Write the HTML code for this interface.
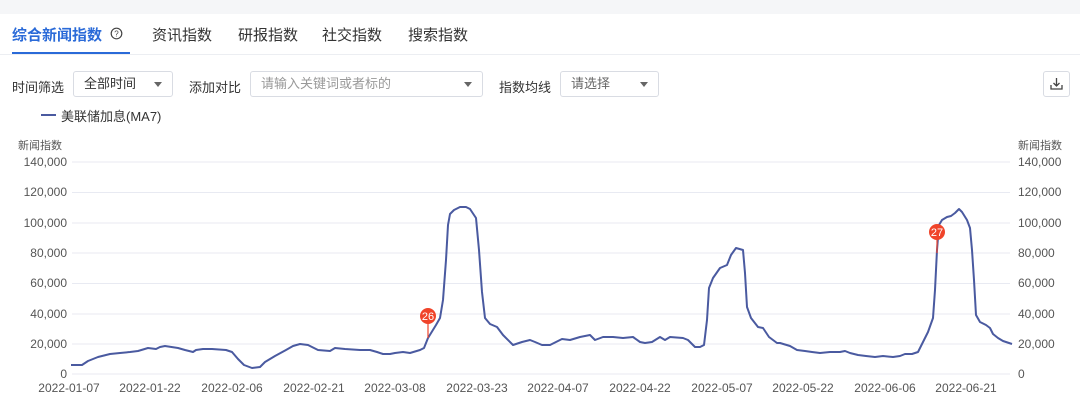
<!DOCTYPE html>
<html><head><meta charset="utf-8"><style>
body{margin:0;width:1080px;height:401px;background:#f5f6f8;font-family:"Liberation Sans","Noto Sans CJK SC",sans-serif;overflow:hidden;position:relative}
.card{position:absolute;left:0;top:14px;width:1080px;height:387px;background:#fff}
.t{position:absolute;white-space:nowrap}
.tab{top:24px;font-size:15px;color:#333}
.sel{position:absolute;top:71px;height:26px;border:1px solid #d9dce3;border-radius:3px;background:#fff;box-sizing:border-box;font-size:13px;color:#333;line-height:24px;padding-left:10px}
.sel i{position:absolute;right:10px;top:10px;border:4px solid transparent;border-top:5px solid #666;border-bottom:0}
.lbl{top:77px;font-size:13px;color:#333}
</style></head><body>
<div class="card"></div>
<div class="t tab" style="left:12px;color:#2a6ad8;font-weight:bold">综合新闻指数</div>
<svg class="t" style="left:110px;top:27px" width="13" height="13"><circle cx="6.5" cy="6.5" r="5.3" fill="none" stroke="#444" stroke-width="1.2"/><text x="6.5" y="9.5" font-size="8" text-anchor="middle" fill="#444" font-family="Liberation Sans">?</text></svg>
<div class="t" style="left:12px;top:52px;width:118px;height:2px;background:#2a6ad8"></div>
<div class="t" style="left:0;top:54px;width:1080px;height:1px;background:#eceef2"></div>
<div class="t tab" style="left:152px">资讯指数</div>
<div class="t tab" style="left:238px">研报指数</div>
<div class="t tab" style="left:322px">社交指数</div>
<div class="t tab" style="left:408px">搜索指数</div>
<div class="t lbl" style="left:12px">时间筛选</div>
<div class="sel" style="left:73px;width:100px">全部时间<i></i></div>
<div class="t lbl" style="left:189px">添加对比</div>
<div class="sel" style="left:250px;width:233px;color:#999">请输入关键词或者标的<i></i></div>
<div class="t lbl" style="left:499px">指数均线</div>
<div class="sel" style="left:560px;width:99px;color:#666">请选择<i></i></div>
<div class="sel" style="left:1043px;width:27px;padding:0"><svg width="25" height="24"><path d="M12.5 6v8M9.5 11l3 3 3-3M7 13v4h11v-4" fill="none" stroke="#444" stroke-width="1.3"/></svg></div>
<div class="t" style="left:41px;top:114px;width:15px;height:2px;background:#4a5aa0"></div>
<div class="t" style="left:61px;top:106px;font-size:13px;color:#333">美联储加息(MA7)</div>
<svg class="t" style="left:0;top:0" width="1080" height="401">
<g stroke="#e8eaf2" stroke-width="1">
<line x1="72" x2="1010" y1="162" y2="162"/><line x1="72" x2="1010" y1="192.5" y2="192.5"/><line x1="72" x2="1010" y1="223" y2="223"/><line x1="72" x2="1010" y1="253" y2="253"/><line x1="72" x2="1010" y1="283.5" y2="283.5"/><line x1="72" x2="1010" y1="314" y2="314"/><line x1="72" x2="1010" y1="344" y2="344"/><line x1="72" x2="1010" y1="374" y2="374"/>
</g>
<g font-size="12" fill="#555" font-family="Liberation Sans">
<text x="18" y="149" font-family="Liberation Sans,Noto Sans CJK SC" font-size="11">新闻指数</text>
<text x="1018" y="149" font-family="Liberation Sans,Noto Sans CJK SC" font-size="11">新闻指数</text>
<g text-anchor="end"><text x="67" y="166">140,000</text><text x="67" y="196">120,000</text><text x="67" y="227">100,000</text><text x="67" y="257">80,000</text><text x="67" y="287">60,000</text><text x="67" y="318">40,000</text><text x="67" y="348">20,000</text><text x="67" y="378">0</text></g>
<g><text x="1018" y="166">140,000</text><text x="1018" y="196">120,000</text><text x="1018" y="227">100,000</text><text x="1018" y="257">80,000</text><text x="1018" y="287">60,000</text><text x="1018" y="318">40,000</text><text x="1018" y="348">20,000</text><text x="1018" y="378">0</text></g>
<g text-anchor="middle"><text x="69" y="392">2022-01-07</text><text x="150" y="392">2022-01-22</text><text x="232" y="392">2022-02-06</text><text x="314" y="392">2022-02-21</text><text x="395" y="392">2022-03-08</text><text x="477" y="392">2022-03-23</text><text x="558" y="392">2022-04-07</text><text x="640" y="392">2022-04-22</text><text x="722" y="392">2022-05-07</text><text x="803" y="392">2022-05-22</text><text x="885" y="392">2022-06-06</text><text x="966" y="392">2022-06-21</text></g>
</g>
<polyline fill="none" stroke="#4a5aa0" stroke-width="2" stroke-linejoin="round" points="71,365 82,365 88,361 98,357 110,354 120,353 130,352 138,351 148,348 156,349 160,347 165,346 178,348 185,350 193,352 196,350 203,349 212,349 226,350 232,352 238,359 244,365 252,368 260,367 265,362 275,356 286,350 293,346 300,344 308,345 318,350 330,351 335,348 345,349 360,350 370,350 377,352 383,354 390,354 395,353 403,352 410,353 420,350 424,348 428,338 436,325 440,318 443,300 446,260 448,225 450,214 454,210 460,207 466,207 470,209 476,218 479,250 482,292 485,318 490,324 497,327 503,335 513,345 522,342 530,340 535,342 542,345 550,345 562,339 570,340 580,337 590,335 595,340 603,337 613,337 623,338 633,337 640,342 645,343 652,342 660,337 665,340 670,337 683,338 688,340 695,347 700,347 704,345 707,320 709,288 713,278 720,268 727,265 731,255 736,248 743,250 745,273 747,307 751,318 758,327 763,328 769,337 777,343 780,343 790,346 797,350 805,351 812,352 820,353 830,352 840,352 845,351 850,353 858,355 866,356 875,357 883,356 893,357 900,356 905,354 912,354 918,352 923,342 928,332 933,318 935,290 937,250 939,225 942,220 947,217 951,216 955,213 959,209 962,212 967,220 970,228 972,250 974,280 976,315 980,322 986,325 990,328 993,334 998,338 1003,341 1012,344"/>
<line x1="428" y1="316" x2="428" y2="338" stroke="#f0442a" stroke-width="1.2"/>
<circle cx="428" cy="316" r="8" fill="#f0442a"/><text x="428" y="320" font-size="11" fill="#fff" text-anchor="middle" font-family="Liberation Sans">26</text>
<line x1="937" y1="232" x2="937" y2="253" stroke="#f0442a" stroke-width="1.2"/>
<circle cx="937" cy="232" r="8" fill="#f0442a"/><text x="937" y="236" font-size="11" fill="#fff" text-anchor="middle" font-family="Liberation Sans">27</text>
</svg>
</body></html>
